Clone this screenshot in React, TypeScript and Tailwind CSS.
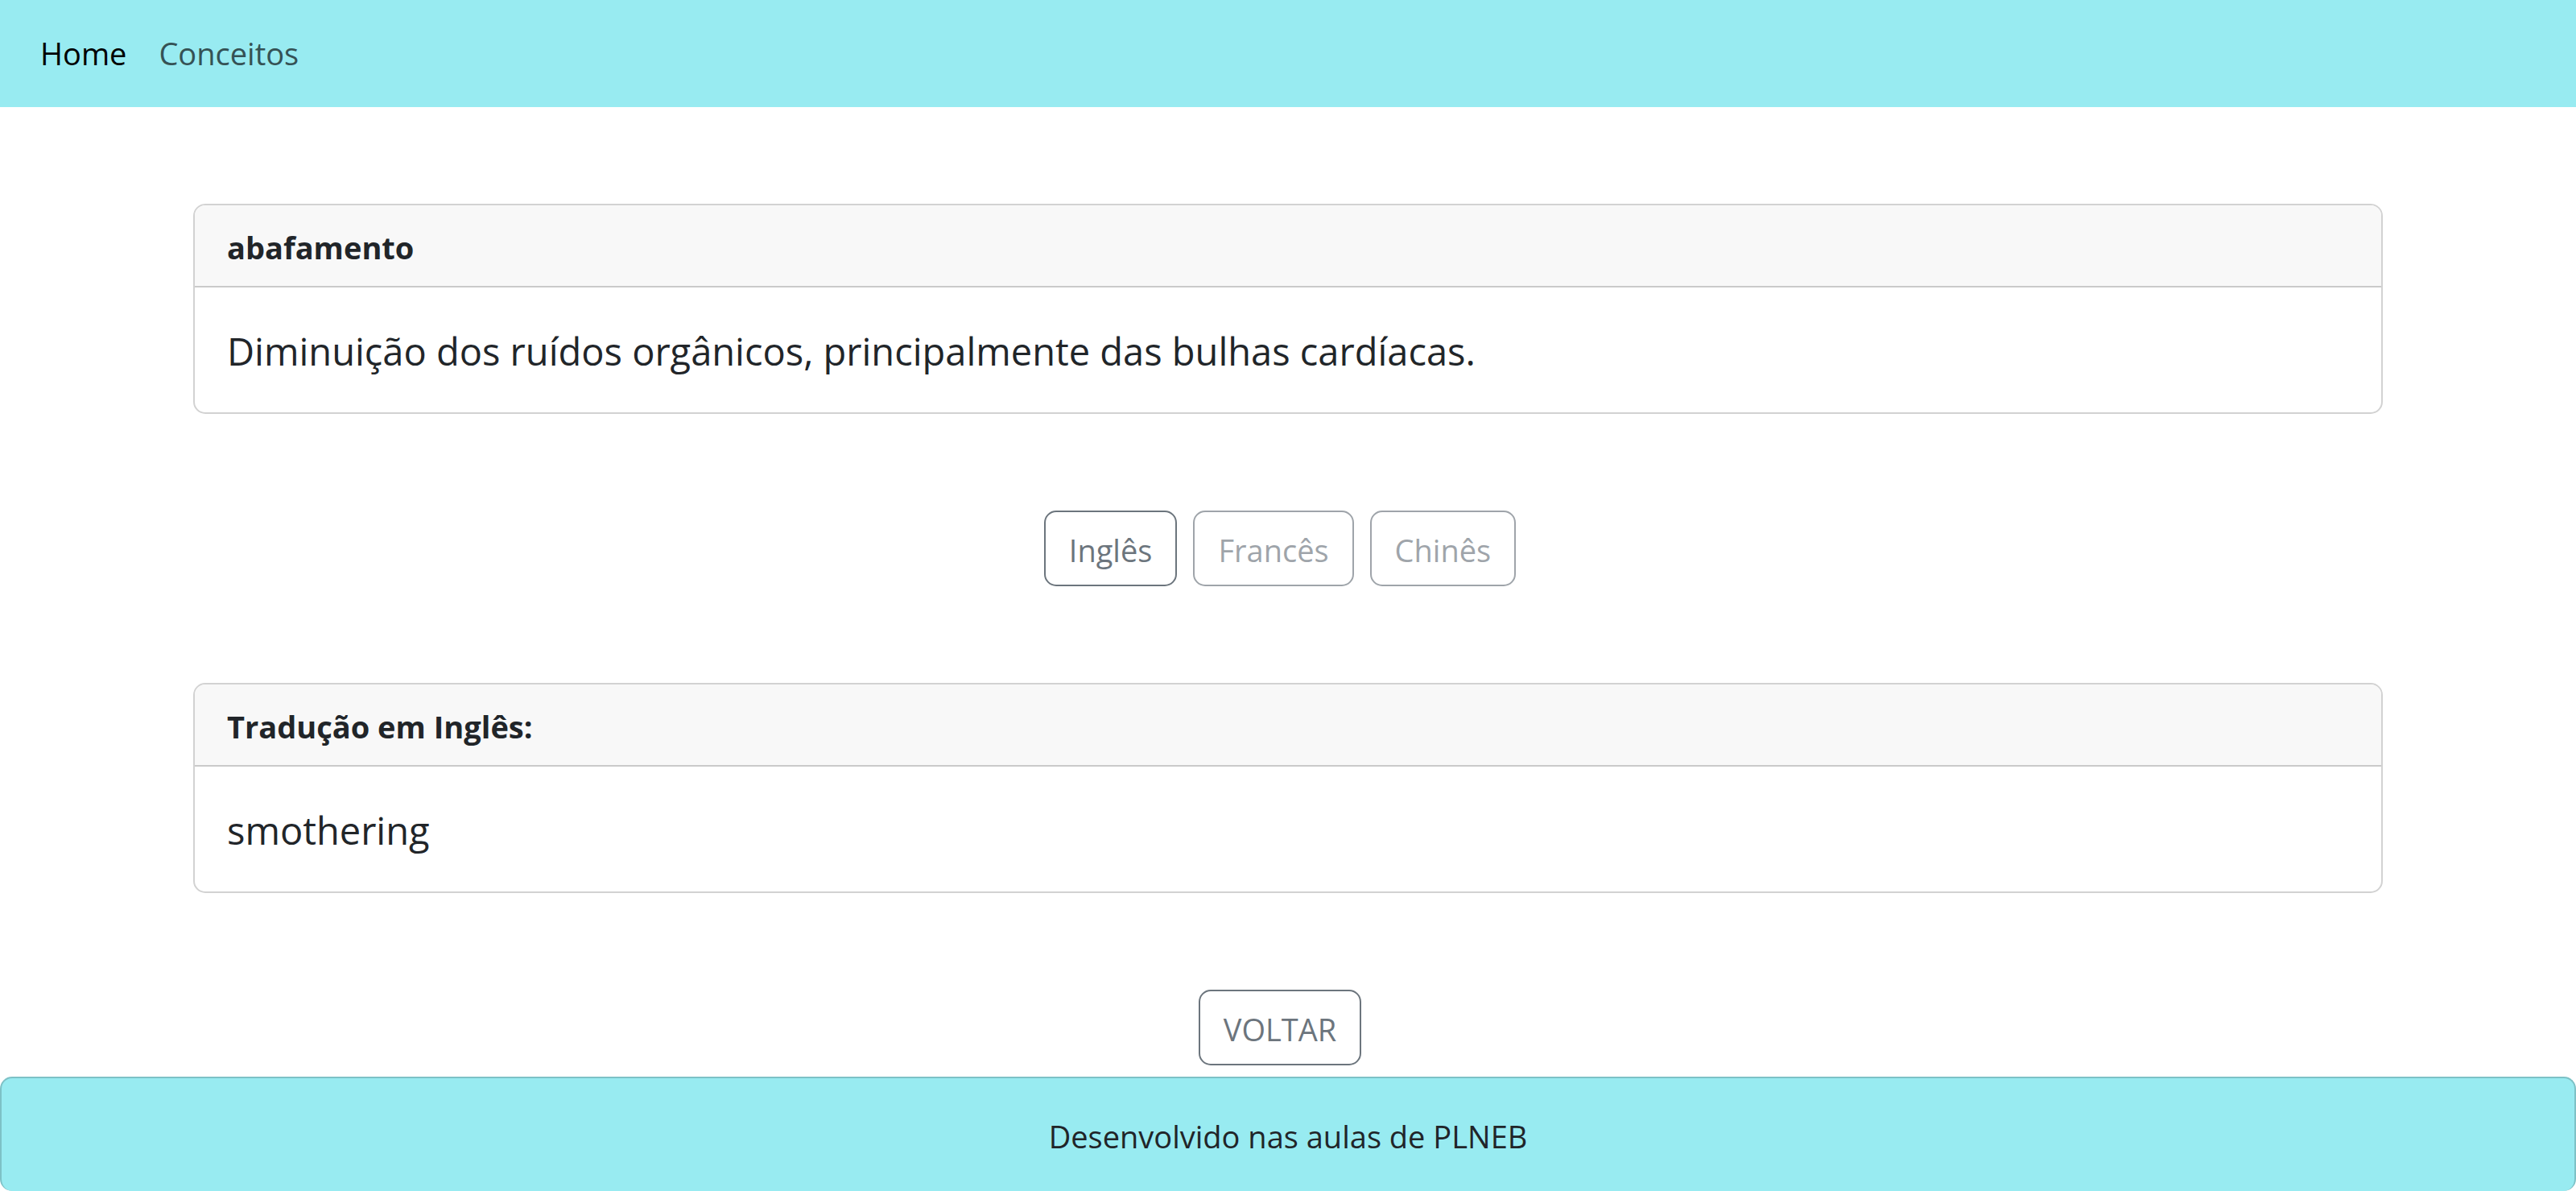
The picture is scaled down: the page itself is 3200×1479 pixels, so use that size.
import type { ReactNode } from "react";

function Card({ title, children }: { title: string; children: ReactNode }) {
  return (
    <section className="overflow-hidden rounded-[15px] border-2 border-[#d2d2d2] bg-white">
      <h2 className="border-b-2 border-[#cacaca] bg-[#f8f8f8] px-10 pt-[22px] pb-[18px] text-[38px] leading-[60px] font-bold">
        {title}
      </h2>
      <p className="px-10 pt-[42px] pb-[38px] text-[47px] leading-[75px]">{children}</p>
    </section>
  );
}

function OutlineButton({ children, disabled = false }: { children: ReactNode; disabled?: boolean }) {
  return (
    <button
      type="button"
      disabled={disabled}
      className="rounded-[15px] border-2 border-[#6c757d] px-[29px] pt-[17px] pb-[13px] text-[38px] leading-[60px] text-[#6c757d] disabled:opacity-65"
    >
      {children}
    </button>
  );
}

export default function App() {
  return (
    <div className="min-h-screen bg-white font-['Open_Sans','Noto_Sans',sans-serif] text-[#212529]">
      <nav className="flex gap-10 bg-[#98ebf1] px-[50px] pt-9 pb-[37px] text-[38px] leading-[60px]">
        <a href="#home" aria-current="page" className="text-black">
          Home
        </a>
        <a href="#conceitos" className="text-[#355255]">
          Conceitos
        </a>
      </nav>
      <main className="flex flex-col gap-[120px] px-60 pt-[120px] pb-[14px]">
        <Card title="abafamento">
          Diminuição dos ruídos orgânicos, principalmente das bulhas cardíacas.
        </Card>
        <div className="flex justify-center gap-5 pr-5">
          <OutlineButton>Inglês</OutlineButton>
          <OutlineButton disabled>Francês</OutlineButton>
          <OutlineButton disabled>Chinês</OutlineButton>
        </div>
        <Card title="Tradução em Inglês:">smothering</Card>
        <div className="flex justify-center pr-5">
          <OutlineButton>VOLTAR</OutlineButton>
        </div>
      </main>
      <footer className="rounded-[15px] border-2 border-b-0 border-[#7dc1c6] bg-[#98ebf1] pt-[42px] pb-[38px] text-center text-[38px] leading-[60px]">
        Desenvolvido nas aulas de PLNEB
      </footer>
    </div>
  );
}
